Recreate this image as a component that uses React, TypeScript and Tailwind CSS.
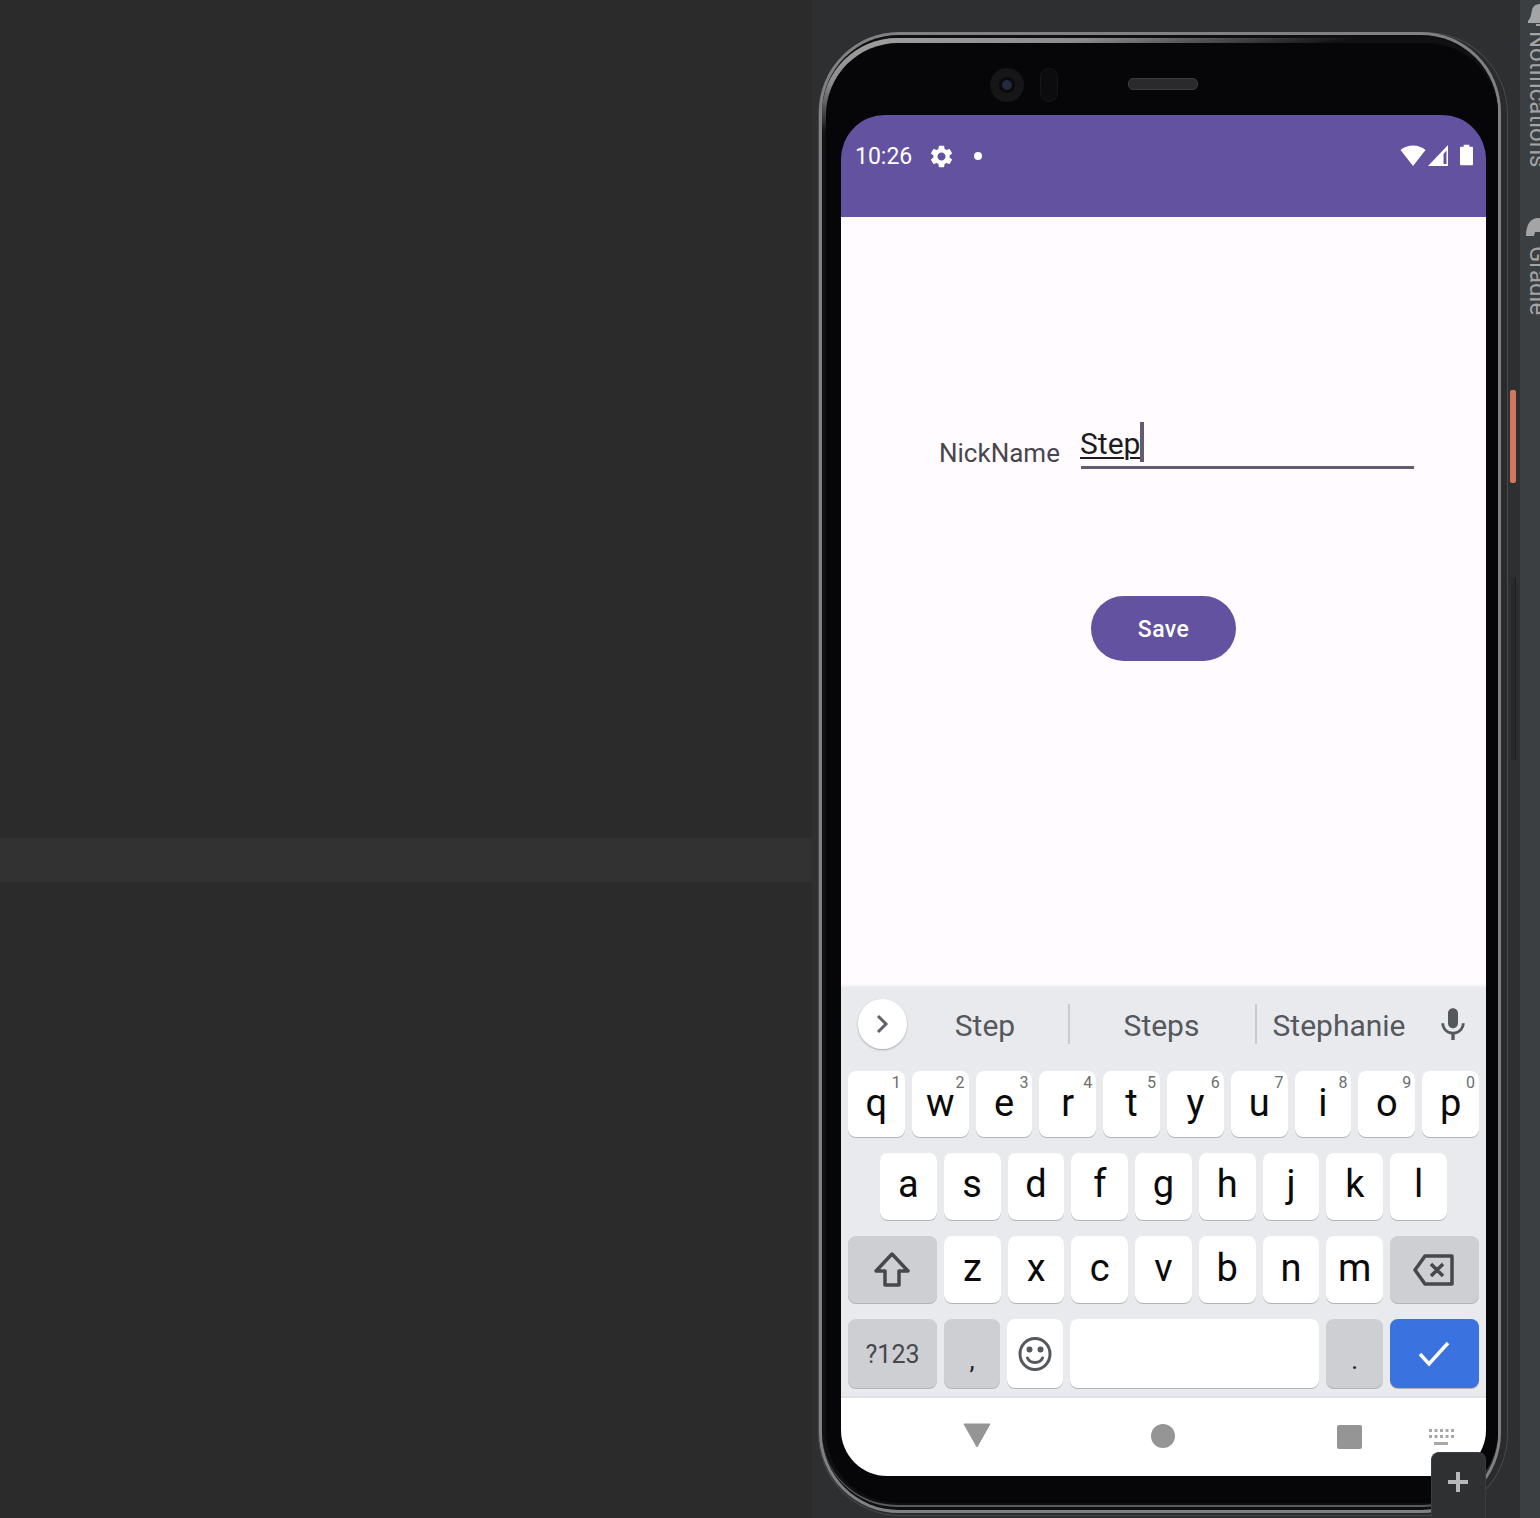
import React from 'react';
import { MdMic, MdSettings } from 'react-icons/md';

const topRow = [['q', '1'], ['w', '2'], ['e', '3'], ['r', '4'], ['t', '5'], ['y', '6'], ['u', '7'], ['i', '8'], ['o', '9'], ['p', '0']];
const midRow = ['a', 's', 'd', 'f', 'g', 'h', 'j', 'k', 'l'];
const lowRow = ['z', 'x', 'c', 'v', 'b', 'n', 'm'];

function Key({ children, hint, className = '' }: { children?: React.ReactNode, hint?: string, className?: string }) {
    return (
        <div className={`relative flex items-center justify-center rounded-lg bg-white shadow-[0_1px_0_#b1b3b6] ${className}`}>
            {hint && <span className="absolute top-[1px] right-[4px] text-[16px] leading-[22px] text-[#6b6d70]">{hint}</span>}
            {children}
        </div>
    );
}

function Letter({ value, className = '-translate-y-[1px]' }: { value: string, className?: string }) {
    return <span className={`inline-block text-[38px] leading-none text-[#0a0a0a] ${className}`}>{value}</span>;
}

function StatusBar() {
    return (
        <div className="h-[102px] shrink-0 bg-[#63529f] flex items-start pt-[27px] pl-[14px] pr-[13px] text-white">
            <span className="text-[23px] leading-[30px] w-[66px]">10:26</span>
            <MdSettings className="ml-[7px] mt-[1px] w-[27px] h-[27px]" />
            <span className="ml-[19px] mt-[10px] w-[8px] h-[8px] rounded-full bg-white" />
            <div className="ml-auto flex items-start gap-[2px]">
                <svg width="26" height="22" viewBox="0 0 26 22" className="mt-[3px]">
                    <path d="M0.500 5 C7 -1 19 -1 25.500 5 L13 21 Z" fill="#fff" />
                </svg>
                <svg width="20" height="21" viewBox="0 0 20 21" className="mt-[3px]">
                    <path d="M20 0 V21 H0 Z M15.500 9 L18.500 5.500 V19 H15.500 Z" fill="#fff" fillRule="evenodd" />
                </svg>
                <svg width="13" height="22" viewBox="0 0 14 22" className="ml-[10px] mt-[2px]">
                    <path d="M4 0 H10 V2 H13 A1 1 0 0 1 14 3 V21 A1 1 0 0 1 13 22 H1 A1 1 0 0 1 0 21 V3 A1 1 0 0 1 1 2 H4 Z" fill="#fff" />
                </svg>
            </div>
        </div>
    );
}

function Form() {
    return (
        <div className="flex-1 bg-[#fffbfe] pt-[205px] flex flex-col">
            <div className="flex items-start">
                <span className="ml-[98px] w-[142px] mt-[13px] text-[26px] leading-[36px] text-[#49454f]">NickName</span>
                <div className="w-[333px] h-[47px] border-b-[3px] border-[#625b71] flex items-start">
                    <span className="ml-[-1px] mt-[4px] text-[30px] leading-[36px] text-[#1c1b1f] underline decoration-2 underline-offset-[3px]">Step</span>
                    <span className="w-[4px] h-[40px] bg-[#625b71]" />
                </div>
            </div>
            <button className="self-center mt-[125px] pt-[4px] w-[145px] h-[65px] rounded-full bg-[#63529f] text-white text-[23px] tracking-[0.400px] font-medium">Save</button>
        </div>
    );
}

function Suggestions() {
    return (
        <div className="h-[84px] flex items-start">
            <div className="ml-[17px] mt-[12px] w-[49px] h-[50px] rounded-full bg-white shadow-[0_1px_2px_#a6a8ab] flex items-center justify-center">
                <svg width="16" height="20" viewBox="0 0 16 20" fill="none" stroke="#5f6368" strokeWidth="3"><path d="M3 2 L11 10 L3 18" /></svg>
            </div>
            <span className="w-[161px] pr-[5px] mt-[20px] text-center text-[30px] leading-[38px] text-[#55585c]">Step</span>
            <span className="mt-[17px] h-[40px] w-[2px] bg-[#c9cbce]" />
            <span className="w-[185px] pr-[2px] mt-[20px] text-center text-[30px] leading-[38px] text-[#55585c]">Steps</span>
            <span className="mt-[17px] h-[40px] w-[2px] bg-[#c9cbce]" />
            <span className="w-[164px] mt-[20px] text-center text-[30px] leading-[38px] text-[#55585c]">Stephanie</span>
            <MdMic className="mt-[18px] ml-[12px] w-[40px] h-[40px] text-[#55585c]" />
        </div>
    );
}

function Keyboard() {
    return (
        <div className="h-[411px] shrink-0 bg-[#e8eaed] border-b-2 border-[#e0e2e5] shadow-[0_-2px_2px_#f1f1f4] flex flex-col">
            <Suggestions />
            <div className="flex gap-[7px] px-[7px] h-[66px]">
                {topRow.map(([l, h]) => <Key key={l} hint={h} className="flex-1"><Letter value={l} /></Key>)}
            </div>
            <div className="flex gap-[7px] px-[39px] h-[67px] mt-[16px]">
                {midRow.map((l) => <Key key={l} className="flex-1"><Letter value={l} className="-translate-y-[3px]" /></Key>)}
            </div>
            <div className="flex gap-[7px] px-[7px] h-[67px] mt-[16px]">
                <Key className="w-[89px] shrink-0 !bg-[#cdcfd3]">
                    <svg width="38" height="38" viewBox="0 0 38 38" className="mr-[2px]" fill="none" stroke="#46484b" strokeWidth="3.500" strokeLinejoin="round"><path d="M19 3 L35 20 H26 V34 H12 V20 H3 Z" /></svg>
                </Key>
                {lowRow.map((l) => <Key key={l} className="flex-1"><Letter value={l} className="-translate-y-[2px]" /></Key>)}
                <Key className="w-[89px] shrink-0 !bg-[#cdcfd3]">
                    <svg width="42" height="34" viewBox="0 0 42 34" className="mr-[1px]" fill="none" stroke="#46484b" strokeWidth="3.500" strokeLinejoin="round"><path d="M12 3 H39 V31 H12 L2 17 Z M18 11 L30 23 M30 11 L18 23" /></svg>
                </Key>
            </div>
            <div className="flex gap-[7px] px-[7px] h-[69px] mt-[16px]">
                <Key className="w-[89px] shrink-0 !bg-[#cdcfd3]"><span className="text-[25px] mt-[2px] text-[#46484b]">?123</span></Key>
                <Key className="w-[56px] shrink-0 !bg-[#cdcfd3]"><span className="text-[26px] text-[#222] mt-[14px]">,</span></Key>
                <Key className="w-[56px] shrink-0">
                    <svg width="36" height="36" viewBox="0 0 36 36" fill="none" stroke="#55585c" strokeWidth="3" strokeLinecap="round"><ellipse cx="18" cy="18" rx="15" ry="15.500" /><path d="M10.500 22 C13 28 23 28 25.500 22" /><circle cx="12.500" cy="13.500" r="1.500" fill="#55585c" /><circle cx="23.500" cy="13.500" r="1.500" fill="#55585c" /></svg>
                </Key>
                <Key className="flex-1" />
                <Key className="w-[56.800px] shrink-0 !bg-[#cdcfd3]"><span className="text-[26px] text-[#222] mt-[14px]">.</span></Key>
                <Key className="w-[89px] shrink-0 !bg-[#3a73e0]">
                    <svg width="32" height="26" viewBox="0 0 32 26" className="mr-[1px]" fill="none" stroke="#fff" strokeWidth="3.500"><path d="M2 13 L11 23 L30 2" /></svg>
                </Key>
            </div>
        </div>
    );
}

function NavBar() {
    return (
        <div className="h-[78px] shrink-0 bg-white flex items-start pt-[24px] pl-[43px]">
            <div className="w-[186px] flex justify-center">
                <svg width="28" height="26" viewBox="0 0 28 26"><path d="M1 2 H27 L14 25 Z" fill="#959595" stroke="#959595" strokeLinejoin="round" /></svg>
            </div>
            <div className="w-[186px] flex justify-center mt-[2px]"><span className="w-[24px] h-[24px] rounded-full bg-[#959595]" /></div>
            <div className="w-[186px] flex justify-center mt-[3px]"><span className="w-[25px] h-[24px] rounded-[2px] bg-[#959595]" /></div>
            <svg width="26" height="18" viewBox="0 0 26 18" className="ml-[-13px] mt-[7px]" fill="#a8a8a8">
                <rect x="0" y="0" width="3" height="3" /><rect x="5.500" y="0" width="3" height="3" /><rect x="11" y="0" width="3" height="3" /><rect x="16.500" y="0" width="3" height="3" /><rect x="22" y="0" width="3" height="3" />
                <rect x="0" y="6" width="3" height="3" /><rect x="5.500" y="6" width="3" height="3" /><rect x="11" y="6" width="3" height="3" /><rect x="16.500" y="6" width="3" height="3" /><rect x="22" y="6" width="3" height="3" />
                <rect x="5" y="13" width="14" height="3" />
            </svg>
        </div>
    );
}

function Phone() {
    return (
        <div className="relative ml-[6px] mt-[32px] w-[690px] h-[1484px] rounded-[82px] bg-[#2a2b2d] pl-px pr-[7px] pb-[3px] shadow-[inset_0_0_0_1px_#48494b]">
            {/* outer bright edge */}
            <div className="h-full rounded-[80px] bg-[#808183] p-[3px]">
                <div className="h-full rounded-[77px] bg-[#0f0f11] pt-[3px] pb-[3px]">
                    {/* inner highlight, only the top left catches light */}
                    <div className="h-full rounded-[75px] bg-[linear-gradient(170deg,#a4a4a4_0%,#8c8c8c_3%,#101012_6%)] border-b-2 border-[#5a5b5d] pt-[5px] pb-[2px] pl-[4px]">
                        <div className="h-full rounded-[72px] bg-[#060608] pl-[15px] pr-[12px] flex flex-col">
                            <div className="h-[72px] shrink-0 flex items-start">
                                <div className="ml-[149px] mt-[25px] w-[34px] h-[34px] rounded-full bg-[#161618] flex items-center justify-center">
                                    <div className="w-[16px] h-[16px] rounded-full bg-[#232a3c] border-[3px] border-[#0a0a0c]" />
                                </div>
                                <div className="ml-[16px] mt-[25px] w-[18px] h-[34px] rounded-full border border-[#17171a] bg-[#0c0c0e]" />
                                <div className="ml-[70px] mt-[35px] w-[70px] h-[12px] rounded-[5px] bg-[#2a2a2c] border border-[#3a3a3c]" />
                            </div>
                            <div className="flex-1 mb-[27px] rounded-t-[44px] rounded-b-[46px] overflow-hidden flex flex-col">
                                <StatusBar />
                                <Form />
                                <Keyboard />
                                <NavBar />
                            </div>
                        </div>
                    </div>
                </div>
            </div>
            {/* side buttons */}
            <span className="absolute left-[692px] top-[358px] w-[6px] h-[93px] rounded-[2px] bg-[#d2775f]" />
            <span className="absolute left-[693px] top-[546px] w-[5px] h-[182px] bg-[#28292b] border-r border-[#1c1c1e]" />
            {/* emulator zoom control */}
            <div className="absolute left-[613px] top-[1420px] w-[55px] h-[66px] rounded-t-lg bg-[#2f3032] border border-b-0 border-[#3b3c3e] flex items-start justify-center pt-[19px] pr-[2px]">
                <svg width="20" height="20" viewBox="0 0 20 20" fill="#b8b8b8"><rect x="8" y="0" width="4" height="20" /><rect x="0" y="8" width="20" height="4" /></svg>
            </div>
        </div>
    );
}

function ToolStrip() {
    return (
        <div className="w-[20px] shrink-0 bg-[#3c3f41] overflow-hidden flex flex-col items-start text-[#a2a4a6] font-['Roboto',sans-serif]">
            <svg width="20" height="22" viewBox="0 0 20 22" className="shrink-0 ml-[7px] mt-[4px]" fill="#a2a4a6">
                <path d="M1 17 C4 14 4 10 5 6 C6 2 9 0 13 0 H20 V19 H1 Z" />
                <rect x="9" y="20" width="11" height="2" />
            </svg>
            <span className="mt-[5px] ml-[6px] w-[24px] [writing-mode:vertical-rl] text-[24px] leading-[24px] whitespace-nowrap h-[140px] shrink-0">Notifications</span>
            <svg width="20" height="18" viewBox="0 0 20 18" className="shrink-0 ml-[6px] mt-[47px]" fill="#a2a4a6">
                <path d="M0 18 C0 6 5 0 12 0 C16 0 20 3 20 6 V18 H15 L14 14 H9 L8 18 Z" />
            </svg>
            <span className="mt-[10px] ml-[6px] w-[24px] [writing-mode:vertical-rl] text-[24px] leading-[24px] whitespace-nowrap shrink-0">Gradle</span>
        </div>
    );
}

export default function App() {
    return (
        <div className="w-[1540px] h-[1518px] overflow-hidden flex font-['Roboto',sans-serif]">
            <div className="w-[812px] shrink-0 bg-[#2b2b2b] flex flex-col">
                <div className="h-[838px]" />
                <div className="h-[44px] bg-[#323232]" />
            </div>
            <div className="flex-1 bg-[#2e2f31]">
                <Phone />
            </div>
            <ToolStrip />
        </div>
    );
}
